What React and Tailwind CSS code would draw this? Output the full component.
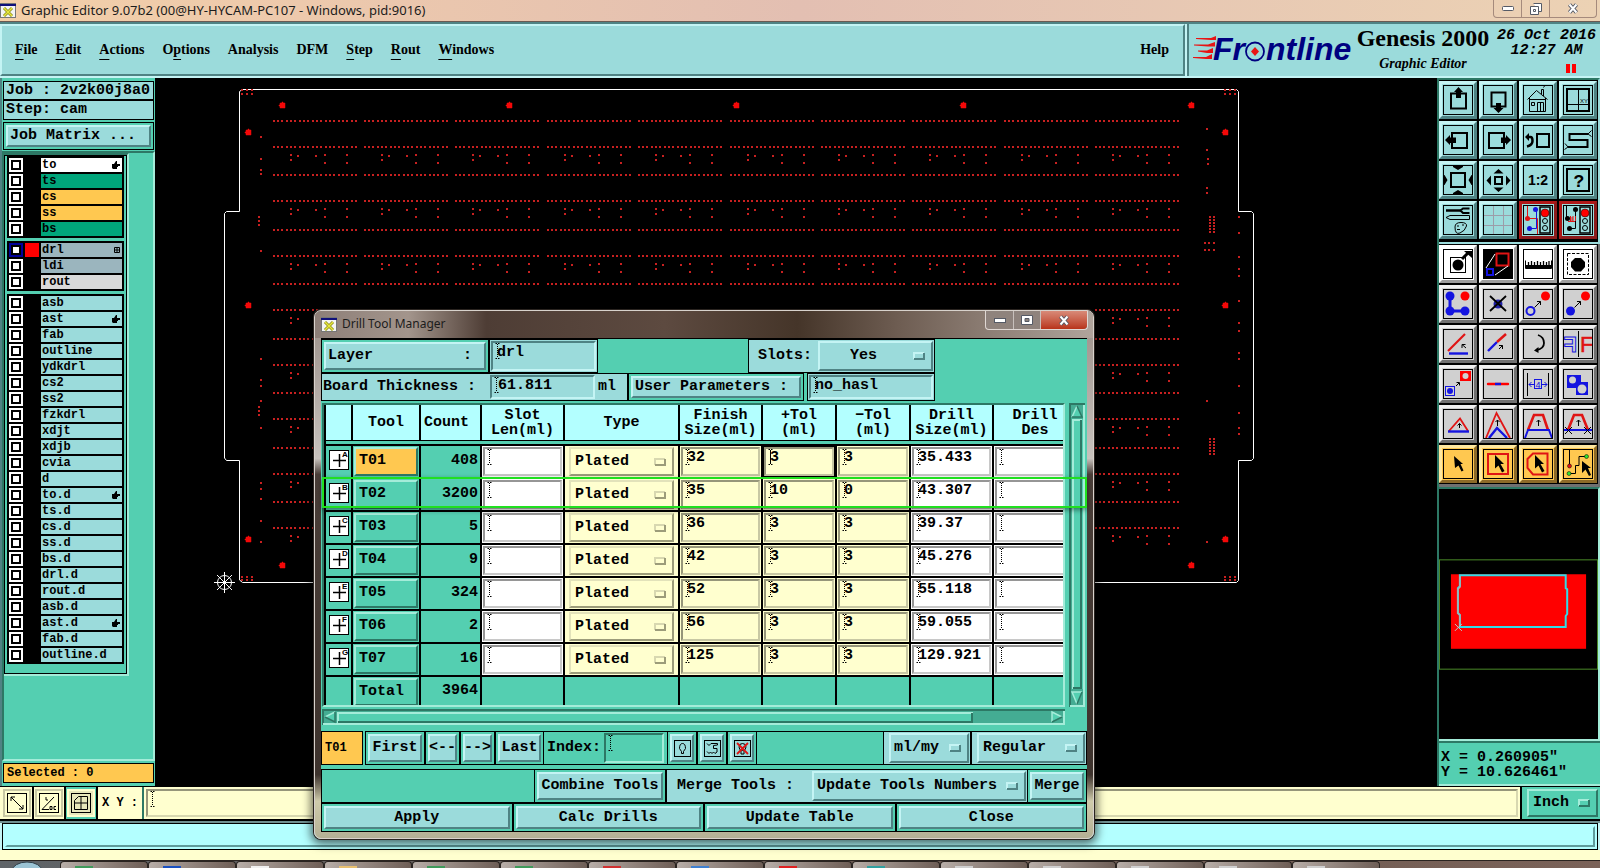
import React from "react";

const MONO = "font-['Liberation_Mono',monospace] font-bold";
const RAISED = "border-2 border-t-[#c4f4f4] border-l-[#c4f4f4] border-b-[#4f8384] border-r-[#4f8384] bg-[#9bdbdb]";
const SUNKEN = "border-2 border-t-[#4f8384] border-l-[#4f8384] border-b-[#c4f4f4] border-r-[#c4f4f4] bg-[#9bdbdb]";
const TEAL_RAISED = "border-2 border-t-[#a4ecd9] border-l-[#a4ecd9] border-b-[#2d7865] border-r-[#2d7865]";
const TEAL_SUNKEN = "border-2 border-t-[#2d7865] border-l-[#2d7865] border-b-[#a4ecd9] border-r-[#a4ecd9]";

function Beam({ solid }) {
  return (
    <svg width="5" height="16" viewBox="0 0 5 16" className="pointer-events-none absolute left-[2px] top-0" aria-hidden="true">
      <path d="M0.5 0.5H2M3 0.5H4.5M0.5 15.5H2M3 15.5H4.5" stroke="#000" fill="none" />
      <path d="M2.5 1V15" stroke="#000" strokeDasharray={solid ? undefined : "1 1"} fill="none" />
    </svg>
  );
}

function Entry({ label, value = "", className, solid, pad = "pb-[8px]" }) {
  return (
    <div className={"relative flex " + className}>
      <Beam solid={solid} />
      <input aria-label={label} defaultValue={value} className={"h-full w-full min-w-0 bg-transparent pl-1 text-[15px] leading-4 outline-none " + pad} />
    </div>
  );
}

function Pip({ tone = "cyan" }) {
  const c = tone === "yellow" ? ["#d8d8b0", "#9c9c7a"] : tone === "teal" ? ["#a4ecd9", "#2d7865"] : ["#c4f4f4", "#4f8384"];
  return (
    <svg width="12" height="8" viewBox="0 0 12 8" className="pointer-events-none absolute right-[6px] top-1/2 -translate-y-1/2" aria-hidden="true">
      <path d="M1 7V1H11" stroke={c[0]} strokeWidth="2" fill="none" />
      <path d="M1 7H11V1" stroke={c[1]} strokeWidth="2" fill="none" />
    </svg>
  );
}

function Pick({ label, value, className, tone, text = "pl-4" }) {
  return (
    <div className={"relative flex " + className}>
      <select aria-label={label} className={"h-full w-full appearance-none bg-transparent text-[15px] leading-5 outline-none " + text}>
        <option>{value}</option>
      </select>
      <Pip tone={tone} />
    </div>
  );
}

function BoxButton({ children, className = "", label, align = "justify-center" }) {
  return (
    <div className={"flex border border-black bg-[#54cfb1] p-[2px] " + className}>
      <button aria-label={label} className={"flex w-full items-center whitespace-pre text-[15px] leading-5 " + align + " " + RAISED}>
        {children}
      </button>
    </div>
  );
}

/* ---------- layer list ---------- */

const LAYER_GROUPS = [
  [
    ["to", "bg-white", "hand"],
    ["ts", "bg-[#00a57b]"],
    ["cs", "bg-[#ffc850]"],
    ["ss", "bg-[#ffc850]"],
    ["bs", "bg-[#00a57b]"],
  ],
  [
    ["drl", "bg-[#9bb5be]", "grid"],
    ["ldi", "bg-[#9bb5be]"],
    ["rout", "bg-[#d9d9d9]"],
  ],
  ["asb", "ast*", "fab", "outline", "ydkdrl", "cs2", "ss2", "fzkdrl", "xdjt", "xdjb", "cvia", "d", "to.d*", "ts.d", "cs.d", "ss.d", "bs.d", "drl.d", "rout.d", "asb.d", "ast.d*", "fab.d", "outline.d"].map(
    (n) => [n.replace("*", ""), "bg-[#9bdbdb]", n.endsWith("*") ? "hand" : undefined]
  ),
];

function LayerMark({ kind }) {
  if (kind === "hand")
    return (
      <svg width="8" height="8" viewBox="0 0 8 8" aria-hidden="true">
        <path d="M0 3H2L4 0H5V3H8V5H6V6H5V8H1L0 7Z" fill="#000" />
      </svg>
    );
  return (
    <svg width="6" height="6" viewBox="0 0 6 6" aria-hidden="true">
      <path d="M0.5 0.5H5.5V5.5H0.5ZM3 0.5V5.5M0.5 3H5.5" stroke="#000" fill="none" />
    </svg>
  );
}

function LayerPanel() {
  return (
    <aside className={"flex w-[155px] shrink-0 flex-col border-l-2 border-[#4f8384] bg-[#54cfb1] " + MONO}>
      <div className="px-px pt-[3px] text-[15px]">
        <div className="h-5 whitespace-pre border border-b-2 border-black bg-[#9bdbdb] pl-[2px] leading-[18px]">Job : 2v2k00j8a0</div>
        <div className="h-[19px] whitespace-pre border border-t-0 border-black bg-[#9bdbdb] pl-[2px] leading-[18px]">Step: cam</div>
        <div className="mt-[2px] h-[28px] border border-black p-[2px]">
          <button className={"h-full w-full pl-[2px] text-left leading-[18px] " + RAISED}>Job Matrix ...</button>
        </div>
      </div>
      <div className="mt-px flex-1 border-2 border-b-[#a4ecd9] border-l-[#2d7865] border-r-[#a4ecd9] border-t-[#2d7865]">
        <div className="w-[125px] border-b-2 border-r-2 border-t-2 border-b-[#a4ecd9] border-r-[#a4ecd9] border-t-[#2d7865]">
          <div className="flex flex-col gap-[3px] border border-black px-[2px] pb-[9px] pt-0">
            {LAYER_GROUPS.map((group, g) => (
              <div key={g} className="bg-black p-px">
                {group.map(([name, bg, mark]) => (
                  <label key={name} className="flex h-4 items-center gap-[2px] px-px">
                    <input
                      type="checkbox"
                      className={
                        "h-[14px] w-[14px] shrink-0 appearance-none border-2 bg-white shadow-[inset_0_0_0_2px_#000] " +
                        (name === "drl" ? "border-[#00009b]" : "border-white")
                      }
                    />
                    <span className={"h-[14px] w-[14px] shrink-0 " + (name === "drl" ? "bg-[#ff0000]" : "bg-black")} />
                    <span className={"flex h-[14px] flex-1 items-center justify-between pl-px pr-[2px] text-[12px] leading-[14px] " + bg}>
                      {name}
                      {mark && <LayerMark kind={mark} />}
                    </span>
                  </label>
                ))}
              </div>
            ))}
          </div>
        </div>
      </div>
      <div className="p-px pb-[3px] pt-[2px]">
        <div className="h-5 border border-black bg-[#ffc850] pl-[3px] text-[12px] leading-[18px]">Selected : 0</div>
      </div>
    </aside>
  );
}

/* ---------- board canvas ---------- */

const ROWS = [121, 147, 175, 201, 230, 256, 284, 310, 339, 365, 393, 419, 448, 474, 502, 528];
const BLOCKS = Array.from({ length: 10 }, (_, i) => Math.floor(273 + i * 91.4));
const PINS = Array.from({ length: 20 }, (_, i) => Math.floor(i / 3) * 13 + (i % 3) * 4);
const PARTS = [[18, 8], [18, 13], [25, 9], [43, 9], [52, 8], [52, 16], [74, 8], [74, 16]];

const sq = (x, y, s = 2) => `M${x} ${y}h${s}v${s}h${-s}z`;

function dotsPath() {
  let d = "";
  ROWS.forEach((y, r) => {
    BLOCKS.forEach((x) => {
      PINS.forEach((p) => (d += sq(x + p, y - 1)));
      if (r % 2 === 1) PARTS.forEach(([px, py]) => (d += sq(x + px - 1, y + py - 1)));
    });
  });
  [136, 158, 169, 173, 250, 358, 379, 385, 400, 427, 482, 488, 498, 520, 541].forEach((y) => (d += sq(260, y)));
  [216, 220, 224, 406, 410, 414].forEach((y) => (d += sq(258, y)));
  [[1206, 128], [1206, 149], [1207, 158], [1207, 163], [1206, 187], [1206, 192], [1206, 541], [1206, 400]].forEach(([x, y]) => (d += sq(x, y)));
  [216, 219, 222, 225, 228, 231, 438, 441, 444, 447, 450, 453].forEach((y) => {
    d += sq(1209, y) + sq(1213, y);
  });
  [242, 249].forEach((y) => [1204, 1208, 1213].forEach((x) => (d += sq(x, y))));
  [216, 232, 256, 268, 275, 300, 322, 330, 352, 358, 385, 412, 427, 433].forEach((y) => (d += sq(1238, y)));
  [[241, 91], [1224, 91]].forEach(([x, y]) => [0, 5, 10].forEach((o) => (d += sq(x + o, y - 2) + sq(x + o, y + 2))));
  [[241, 577], [1224, 577]].forEach(([x, y]) => [0, 5, 10].forEach((o) => (d += sq(x + o, y - 1) + sq(x + o, y + 2))));
  return d;
}

const HOLES = [
  [282, 105], [509, 105], [736, 105], [963, 105], [1191, 105],
  [248, 132], [248, 305], [248, 539],
  [1225, 132], [1225, 305], [1225, 539],
  [282, 565], [1191, 565],
];

function Board() {
  return (
    <div className="min-w-0 flex-1 overflow-hidden bg-black">
      <svg width="1282" height="708" viewBox="155 78 1282 708" role="img" aria-label="Drill layer">
        <path d="M242.5 89.5H1236.5L1238.5 91.5V211.5H1251.5L1253.5 213.5V458.5L1251.5 460.5H1238.5V580.5L1236.5 582.5H242.5L239.5 580V460.5H226.5L224.5 458V213.5L226.5 211.5H239.5V91.5Z" fill="none" stroke="#fff" />
        <path d={dotsPath()} fill="#c82020" shapeRendering="crispEdges" />
        {HOLES.map(([x, y]) => (
          <path key={x + "-" + y} d={`M${x - 2} ${y - 2}h2v-1h1v1h2v5h-5v-2h-1v-1h1z`} fill="#f40808" stroke="#f40808" strokeWidth="0.5" />
        ))}
        <g stroke="#fff" fill="none">
          <circle cx="224.5" cy="582.5" r="7" />
          <path d="M214 582.5H235M224.5 572V593M217 575L232 590M232 575L217 590" />
        </g>
      </svg>
    </div>
  );
}

/* ---------- toolbar icons, each on a 30 by 30 grid ---------- */

const K = { stroke: "#000", fill: "none" };
const RED = "#e01414";
const BLUE = "#1414e0";
const ARROW = "M12 6L21 15H17.5L21.5 22L19 23.5L15.5 16.5L12 19.5Z";

const VIEW_ICONS = [
  ["Pan up", <><rect x="8" y="8.5" width="15" height="15" {...K} strokeWidth="2" /><path d="M15.5 2L20 7H18V13H13V7H11Z" fill="#000" /></>],
  ["Pan down", <><rect x="8.5" y="7.5" width="14" height="14" {...K} strokeWidth="2" /><path d="M15.5 28L20.5 23H18V18H13V23H10.5Z" fill="#000" /></>],
  ["Home", <path {...K} d="M4.5 14.5L13.5 5.5L24.5 14.5M6.5 13V26.5H22.5V13M6.5 14.5H22.5M14.5 26.5V17.5H20.5V26.5M8.5 17.5H11.5V20.5H8.5ZM17.5 17.5V26.5M18.5 9V4.5H20.5V11M20.5 2.5L21.5 1" />],
  ["Zoom to XY", <><rect x="4" y="4" width="22" height="22" {...K} strokeWidth="2" /><path d="M15.5 4V26M4 19.5H26" {...K} /><text x="17" y="18" fontSize="6" fontFamily="Liberation Sans">XY</text></>],
  ["Pan left", <><rect x="9" y="8" width="15" height="15" {...K} strokeWidth="2" /><path d="M2 15L7 10V12.5H13V18H7V20Z" fill="#000" /></>],
  ["Pan right", <><rect x="6" y="8" width="15" height="15" {...K} strokeWidth="2" /><path d="M28 15L23 10V12.5H18V18H23V20Z" fill="#000" /></>],
  ["Previous view", <><rect x="14" y="9" width="12" height="13" {...K} strokeWidth="2" /><path d="M4 12H7.5Q9.5 12 9.5 16T4 21.5" {...K} strokeWidth="2.5" /><path d="M2 12L6 8V16Z" fill="#000" /></>],
  ["Serpentine", <><path d="M25 9H6.5V15H24.5V22H5" {...K} strokeWidth="2" /><path d="M25 9L28.5 5.5M25 9L28.5 11.5M5 22L2 18.5M5 22L1.5 24.5" {...K} /></>],
  ["Fit", <><rect x="8" y="8" width="14" height="14" {...K} strokeWidth="2" /><path d="M15 5L10 2V0H20V2ZM15 25L10 28V30H20V28ZM4.5 15L1.5 20H0V10H1.5ZM25.5 15L28.5 10H30V20H28.5Z" fill="#000" /></>],
  ["Fit selection", <><rect x="12" y="12" width="7" height="7" {...K} strokeWidth="2" /><path d="M15.5 4L20.5 8.5H10.5ZM15.5 27L20.5 22.5H10.5ZM3.5 15.5L8 10.5V20.5ZM27.5 15.5L23 10.5V20.5Z" fill="#000" /></>],
  ["Scale", <text x="15" y="20" textAnchor="middle" fontSize="14" fontWeight="bold" fontFamily="Liberation Sans">1:2</text>],
  ["Query", <><rect x="4" y="4" width="22" height="22" {...K} strokeWidth="2" /><text x="16" y="22" textAnchor="middle" fontSize="18" fontWeight="bold" fontFamily="Liberation Mono">?</text></>],
  ["Settings", <><path d="M3 5.5H18" {...K} strokeWidth="2.5" /><path d="M26.5 3.5H20L17.5 5.5L20 8H26.5" {...K} strokeWidth="2" /><path d="M3 12.5L7 10.5H26.5V14.5H7Z" {...K} /><path d="M12 22Q12 17.5 18 17.5T23.5 21Q22 26 17 28T12 22ZM14 21H16M19 20H21M14 24.5H17" {...K} /></>],
  ["Grid", <path d="M10.5 0V30M20.5 0V30M0 10.5H30M0 20.5H30" stroke="#9c9ca8" fill="none" />],
  ["Net blue", <><path d="M4.5 0V13.5H14.5V30" stroke={RED} fill="none" /><path d="M13.5 4V23.5H7" stroke={BLUE} fill="none" /><circle cx="12.5" cy="4.5" r="2.5" fill={BLUE} /><circle cx="4.5" cy="13.5" r="2.5" fill={RED} /><circle cx="6.5" cy="23.5" r="2.5" fill={BLUE} /><rect x="17" y="2" width="10" height="26" {...K} strokeWidth="1.5" /><circle cx="22" cy="8" r="4" fill="#f00" stroke="#000" strokeWidth="0.5" /><circle cx="22" cy="16" r="2.5" {...K} /><circle cx="22" cy="23" r="2.5" {...K} /></>, true],
  ["Net black", <><path d="M3.5 0V13.5M12.5 4V23.5H7" {...K} /><path d="M5 16.5H12M7.5 16V11M10 16V11M12.5 16V11M9 12V16" stroke={RED} fill="none" /><circle cx="12.5" cy="4.5" r="2.5" /><circle cx="4.5" cy="13.5" r="2.5" /><circle cx="6.5" cy="23.5" r="2.5" /><rect x="17" y="2" width="10" height="26" {...K} strokeWidth="1.5" /><circle cx="22" cy="8" r="4" fill="#f00" stroke="#000" strokeWidth="0.5" /><circle cx="22" cy="16" r="2.5" {...K} /><circle cx="22" cy="23" r="2.5" {...K} /></>, true],
];

const EDIT_ICONS = [
  ["Add feature", "w", <><rect x="7.5" y="8.5" width="15" height="15" {...K} /><circle cx="15" cy="16" r="5.5" /><path d="M19 10L25 4" stroke="#000" strokeWidth="3" /><path d="M21 2H29V9Z" /></>],
  ["Area zoom", "w", <><rect x="1" y="1" width="28" height="28" /><rect x="13.5" y="4.5" width="12" height="12" fill="none" stroke={RED} strokeWidth="2" /><path d="M12 5L3 19M25 17L12 26" stroke="#fff" fill="none" /><rect x="4" y="20" width="6" height="6" fill="none" stroke={BLUE} strokeWidth="2" /></>],
  ["Measure", "w", <><path d="M2.5 11.5V19.5H28.5V11.5" fill="none" stroke="#000" /><path d="M3 16H28V20H3Z" /><path d="M5.5 13V17M8.5 12V17M11.5 13V17M14.5 12V17M17.5 13V17M20.5 12V17M23.5 13V17M26 12V17" {...K} strokeWidth="1.3" /></>],
  ["Select area", "w", <><rect x="4.5" y="4.5" width="21" height="21" {...K} strokeDasharray="3 1.5" /><path d="M12 9H18L22 13V18L18 22.5H12L8 18V13Z" /></>],
  ["Chain", "g", <><path d="M7 7V22H22" stroke={BLUE} strokeWidth="3" fill="none" /><circle cx="7" cy="7" r="4.5" fill={BLUE} /><circle cx="7" cy="22" r="4.5" fill={BLUE} /><circle cx="22" cy="22" r="4.5" fill={BLUE} /><circle cx="22" cy="7" r="4.5" fill="#f00" /></>],
  ["Delete", "g", <><circle cx="15" cy="15" r="4.5" fill="#2020a8" /><path d="M7 7L23 22M23 7L7 22" {...K} strokeWidth="1.8" /></>],
  ["Move outline", "g", <><circle cx="7.5" cy="22" r="4" fill="none" stroke={BLUE} strokeWidth="2" /><circle cx="22.5" cy="7" r="4.5" fill="#f00" /><path d="M11.5 18.5L17.5 12.5M14 12.5H17.5V16" {...K} /></>],
  ["Copy", "g", <><circle cx="7.5" cy="22" r="4.5" fill={BLUE} /><circle cx="22.5" cy="7" r="4.5" fill="#f00" /><path d="M11.5 18.5L17.5 12.5M14 12.5H17.5V16" {...K} /></>],
  ["Rotate line", "g", <><path d="M5 22L22 5" stroke={RED} strokeWidth="2.2" /><path d="M6 24.5H25" stroke={BLUE} strokeWidth="2.4" /><path d="M23 19L19 15.5M19 19V15.5H22.5" {...K} /></>],
  ["Stretch line", "g", <><path d="M5 22L14 13" stroke={BLUE} strokeWidth="2.4" /><path d="M14 13L23 5" stroke={RED} strokeWidth="2.4" /><path d="M16 20L19.5 16.5M16 16.5H19.5V20" {...K} /></>],
  ["Rotate", "g", <><path d="M15 6Q21 8 21 14T13 21" {...K} strokeWidth="1.8" /><path d="M11 21.5L15.5 18V24Z" /></>],
  ["Mirror", "g", <><path d="M15.5 2V28" {...K} /><g transform="matrix(-1 0 0 1 14 0)"><text x="0" y="23" fontSize="22" fontWeight="bold" fontFamily="Liberation Sans" fill="none" stroke={BLUE}>F</text></g><text x="17" y="23" fontSize="22" fontFamily="Liberation Sans" fill={RED} stroke={RED} strokeWidth="0.5">F</text></>],
  ["Transform", "g", <><rect x="2.5" y="17.5" width="9" height="9" fill="none" stroke={BLUE} /><circle cx="7" cy="22" r="3" fill={BLUE} /><rect x="17" y="2" width="11" height="10" fill="#f00" /><circle cx="22.5" cy="7" r="3" fill="#d0d0d0" /><path d="M13 17L16 14M13.5 13.5H16.5V16.5" {...K} /></>],
  ["Resize line", "g", <><path d="M5 15H25" stroke="#f00" strokeWidth="2.4" strokeLinecap="round" /><path d="M12 15H18" stroke={BLUE} strokeWidth="2.4" /></>],
  ["Spacing", "g", <><path d="M4.5 4V27M25.5 4V27" {...K} /><path d="M6 15.5H11M6 15.5L8.5 13M6 15.5L8.5 18M24 15.5H19M24 15.5L21.5 13M24 15.5L21.5 18" stroke={BLUE} fill="none" /><rect x="11.5" y="10.5" width="7" height="9" fill="none" stroke={BLUE} /><text x="15" y="18.5" textAnchor="middle" fontSize="9" fontFamily="Liberation Sans" fill={BLUE}>4</text></>],
  ["Merge pads", "g", <><path d="M4 6H18V13H25V26H13V19H4Z" fill={BLUE} /><circle cx="9.5" cy="11" r="3.5" fill="#d0d0d0" /><circle cx="19" cy="20" r="4.5" fill="#d0d0d0" /></>],
  ["Triangle", "g", <><path d="M6 22L17 9.5L25 22" fill="none" stroke={RED} strokeWidth="1.8" /><path d="M5 22.5H26" stroke={BLUE} strokeWidth="2.4" /><path d="M16.5 19V14.5M14.5 16.5L16.5 14.5L18.5 16.5" {...K} /></>],
  ["Peak", "g", <><path d="M3 29L13.5 4L27 29" fill="none" stroke={RED} strokeWidth="1.8" /><path d="M6 29L14 19L24 29" fill="none" stroke={BLUE} strokeWidth="2.4" /><path d="M14.5 17V11M12.5 13L14.5 11L16.5 13" {...K} /></>],
  ["Trapezoid", "g", <><path d="M5 21L11 6H20L25 21" fill="none" stroke={RED} strokeWidth="2.6" /><path d="M2 29L5 21H26L29 29" fill="none" stroke={BLUE} strokeWidth="2" /><path d="M15.5 17V11M13.5 13L15.5 11L17.5 13" {...K} /></>],
  ["Trim", "g", <><path d="M5 21L11 6H19L25 21" fill="none" stroke={RED} strokeWidth="2.6" /><path d="M1 21H29" stroke={BLUE} strokeWidth="2" /><path d="M15.5 17V11M13.5 13L15.5 11L17.5 13M2 18L9 25M9 18L2 25M21 18L28 25M28 18L21 25" {...K} /></>],
  ["Pointer", "o", <path d="M11 7L20 15H17.5L20.5 21.5L18.5 22.5L15.5 16.5L12 19Z" />],
  ["Frame select", "o", <><rect x="5" y="5" width="20" height="20" fill="none" stroke={RED} strokeWidth="2" /><path d={ARROW} /></>],
  ["Polygon select", "o", <><path d="M10 4.5H24.5V25.5H10L4.5 19V10Z" fill="none" stroke={RED} strokeWidth="2" /><path d={ARROW} /></>],
  ["Net select", "o", <><path d="M6.5 1V17M6 24.5H12.5V16.5H16V7.5H22" {...K} /><circle cx="6.5" cy="17" r="2" fill={RED} stroke="#000" strokeWidth="0.5" /><circle cx="6" cy="24.5" r="2" fill="#30e030" stroke="#000" strokeWidth="0.5" /><circle cx="23.5" cy="7.5" r="2" fill="#30e030" stroke="#000" strokeWidth="0.5" /><path d="M19 12L28 19H25L28 26L26 27L22.5 20.5L19 24Z" /></>],
];

const TONES = {
  c: "bg-[#9bdbdb] border-t-[#c4f4f4] border-l-[#c4f4f4] border-b-[#4f8384] border-r-[#4f8384]",
  r: "bg-[#9bdbdb] border-t-[#b01818] border-l-[#b01818] border-b-[#8c1c1c] border-r-[#8c1c1c]",
  w: "bg-white border-t-white border-l-white border-b-[#9c9c9c] border-r-[#9c9c9c]",
  g: "bg-[#d0d0d0] border-t-[#f0f0f0] border-l-[#f0f0f0] border-b-[#707070] border-r-[#707070]",
  o: "bg-[#ffc850] border-t-[#ffe8a0] border-l-[#ffe8a0] border-b-[#8c6a28] border-r-[#8c6a28]",
};

function ToolButton({ label, tone, children }) {
  return (
    <button aria-label={label} className={"flex h-[38px] items-center justify-center border-[3px] " + TONES[tone]}>
      <svg width="30" height="30" viewBox="0 0 30 30" className="shrink-0" aria-hidden="true">
        {children}
        <rect x="0.5" y="0.5" width="29" height="29" {...K} />
      </svg>
    </button>
  );
}

function ToolPanel() {
  return (
    <aside className="flex w-[163px] shrink-0 flex-col border-l-2 border-[#2d7865] bg-black">
      <div className="grid grid-cols-4 gap-[2px] border-b-2 border-r-2 border-t-2 border-[#9bdbdb] border-t-[#2d7865] bg-black pb-[3px] pr-px pt-px">
        {VIEW_ICONS.map(([label, art, red]) => (
          <ToolButton key={label} label={label} tone={red ? "r" : "c"}>{art}</ToolButton>
        ))}
      </div>
      <div className="grid grid-cols-4 gap-[2px] border-b-[3px] border-r-2 border-[#707070] bg-black pb-px pr-px pt-px">
        {EDIT_ICONS.map(([label, tone, art]) => (
          <ToolButton key={label} label={label} tone={tone}>{art}</ToolButton>
        ))}
      </div>
      <div className="flex flex-1 flex-col justify-center border-r-2 border-t-2 border-[#a4ecd9] border-t-[#2d7865] bg-black pt-[2px]">
        <svg className="w-full" height="112" viewBox="0 0 160 112" role="img" aria-label="Overview">
          <rect x="0.5" y="0.5" width="159" height="110" fill="none" stroke="#4a8a28" />
          <rect x="12" y="15" width="136" height="75" fill="#ff0000" />
          <path d="M21 16H127.5V29L129 30V55L127.5 57V68H21V56L19 54V29L21 27Z" fill="none" stroke="#30dce8" strokeWidth="2" />
          <path d="M21 17V28L19 30V54L21 56V67" fill="none" stroke="#a8b4b4" strokeWidth="1.5" />
          <path d="M16 65L23 72M23 65L16 72" stroke="#b8c8c8" fill="none" />
        </svg>
      </div>
      <div className={"whitespace-pre border-b-2 border-t-2 border-[#a4ecd9] bg-[#54cfb1] text-[15px] leading-[15px] " + MONO}>
        <div className="border-t-2 border-[#2d7865] pb-[4px] pl-[2px] pt-[7px]">
          <div>X = 0.260905"</div>
          <div>Y = 10.626461"</div>
        </div>
      </div>
    </aside>
  );
}

/* ---------- header ---------- */

const MENUS = [["File", 0], ["Edit", 0], ["Actions", 0], ["Options", 1], ["Analysis", -1], ["DFM", -1], ["Step", 0], ["Rout", 0], ["Windows", 0]];

function XIcon() {
  return (
    <svg width="16" height="15" viewBox="0 0 16 15" aria-hidden="true">
      <rect x="0.5" y="0.5" width="15" height="14" fill="#f4f4f4" stroke="#777" />
      <path d="M0 1H16V3H0Z" fill="#10107a" />
      <path d="M4 5L12 13M12 5L4 13" stroke="#8a8a10" strokeWidth="3" />
      <path d="M4 5L12 13M12 5L4 13" stroke="#e6e640" strokeWidth="1.5" />
    </svg>
  );
}

function Menu({ name, hot }) {
  return (
    <button>
      {hot < 0 ? name : (
        <>
          {name.slice(0, hot)}
          <span className="underline underline-offset-[5px]">{name[hot]}</span>
          {name.slice(hot + 1)}
        </>
      )}
    </button>
  );
}

function Frontline() {
  return (
    <svg width="162" height="44" viewBox="0 -4 162 44" role="img" aria-label="Frontline">
      <path d="M3 6H18L23 4V8H18L3 7ZM1 12.5H15L22 10V14.5H15L1 13.5ZM5 18.5H14L20 16V21H14L5 19.5ZM0 25H13L19 22V27H13L0 26Z" fill="#e81414" />
      <g fontFamily="Liberation Sans" fontWeight="bold" fontStyle="italic" fontSize="32" fill="#000080">
        <text x="20" y="28">Fr</text>
        <text x="73" y="28">ntline</text>
      </g>
      <circle cx="62" cy="19.5" r="9" fill="none" stroke="#000080" strokeWidth="1.8" />
      <path d="M62 15L66 19.5L62 24L58 19.5Z" fill="#e81414" />
    </svg>
  );
}

function Header() {
  return (
    <>
      <div className="flex h-[22px] items-start justify-between border-b border-[#6b5a52] bg-linear-to-r from-[#f3cfa8] via-[#e3bfb2] to-[#ecd2b4]">
        <div className="flex items-center gap-[5px] pt-px font-['Noto_Sans',sans-serif] text-[13px] leading-[18px] text-[#1c1c1c]">
          <XIcon />
          Graphic Editor 9.07b2 (00@HY-HYCAM-PC107 - Windows, pid:9016)
        </div>
        <div className="mr-[3px] flex h-[18px] rounded-b border border-t-0 border-[#a58a7c]">
          <button aria-label="Minimize" className="flex w-7 items-center justify-center border-r border-[#a58a7c]">
            <svg width="12" height="6" viewBox="0 0 12 6"><rect x="0.5" y="0.5" width="11" height="4" rx="1" fill="#fff" stroke="#555a66" /></svg>
          </button>
          <button aria-label="Restore" className="flex w-7 items-center justify-center border-r border-[#a58a7c]">
            <svg width="12" height="12" viewBox="0 0 12 12"><path d="M3.5 .5H11.5V8.5H9M.5 3.5H8.5V11.5H.5ZM3.5 6.5H5.5V8.5H3.5Z" fill="#fff" stroke="#555a66" /></svg>
          </button>
          <button aria-label="Close window" className="flex w-[46px] items-center justify-center">
            <svg width="12" height="11" viewBox="0 0 12 11"><path d="M2.5 1.5L9.5 9.5M9.5 1.5L2.5 9.5" stroke="#555a66" strokeWidth="4" /><path d="M2.5 1.5L9.5 9.5M9.5 1.5L2.5 9.5" stroke="#fff" strokeWidth="2" /></svg>
          </button>
        </div>
      </div>
      <header className="flex h-[56px] border-b-2 border-t-2 border-b-[#c4f4f4] border-t-[#4f8384] bg-[#9bdbdb]">
        <nav className="flex flex-1 items-center gap-[18px] border-2 border-b-[#4f8384] border-l-[#c4f4f4] border-r-[#4f8384] border-t-[#c4f4f4] pb-[2px] pl-[13px] pr-[14px] font-['Liberation_Serif',serif] text-[14px] font-bold">
          {MENUS.map(([name, hot]) => <Menu key={name} name={name} hot={hot} />)}
          <button className="ml-auto">Help</button>
        </nav>
        <div className="flex w-[415px] items-center border-l-2 border-[#c4f4f4]">
          <div className="flex h-full w-full items-center justify-between border-l-2 border-[#4f8384] px-1">
            <Frontline />
            <div className="mr-[6px] text-center font-['Liberation_Serif',serif] font-bold">
              <div className="text-[24px] leading-7">Genesis 2000</div>
              <div className="text-[14px] italic leading-6">Graphic Editor</div>
            </div>
            <div className={"text-center text-[15px] italic leading-[15px] " + MONO}>
              <div>26 Oct 2016</div>
              <div>12:27 AM</div>
              <svg width="12" height="9" viewBox="0 0 12 9" className="ml-auto mr-[18px] mt-[6px]" aria-hidden="true">
                <path d="M0 0H4V9H0ZM6 0H10V9H6Z" fill="#ff0000" />
              </svg>
            </div>
          </div>
        </div>
      </header>
    </>
  );
}

/* ---------- drill tool manager ---------- */

const COLUMNS = [
  ["", "w-[27px]"], ["Tool", "w-[68px]"], ["Count", "w-[61px]"], ["Slot\nLen(ml)", "w-[83px]"], ["Type", "w-[115px]"],
  ["Finish\nSize(ml)", "w-[83px]"], ["+Tol\n(ml)", "w-[74px]"], ["−Tol\n(ml)", "w-[74px]"], ["Drill\nSize(ml)", "w-[83px]"], ["Drill\nDes", "w-[84px]"],
];

const TOOLS = [
  ["T01", 408, "32", "3", "3", "35.433"],
  ["T02", 3200, "35", "10", "0", "43.307"],
  ["T03", 5, "36", "3", "3", "39.37"],
  ["T04", 9, "42", "3", "3", "45.276"],
  ["T05", 324, "52", "3", "3", "55.118"],
  ["T06", 2, "56", "3", "3", "59.055"],
  ["T07", 16, "125", "3", "3", "129.921"],
];

const TD = "h-[33px] border-b-2 border-r-2 border-black p-0";
const WHITE_IN = "m-px h-[29px] border-2 border-b-[#c8c8c8] border-l-[#969696] border-r-[#c8c8c8] border-t-[#969696] bg-white";
const YELLOW_IN = "m-px h-[29px] border-2 border-b-[#c8c8a4] border-l-[#96967a] border-r-[#c8c8a4] border-t-[#96967a] bg-[#ffffcf]";

function DrillMark({ letter }) {
  return (
    <svg width="20" height="20" viewBox="0 0 20 20" className="mb-[3px] ml-[3px]" aria-hidden="true">
      <rect x="0.5" y="0.5" width="19" height="19" fill="#fff" stroke="#000" />
      <path d="M10.5 4V17M4 10.5H17" stroke="#000" strokeWidth="1.5" />
      <text x="13" y="7" fontSize="8" fontFamily="Liberation Sans">{letter}</text>
    </svg>
  );
}

function ToolTable() {
  return (
    <div className="relative z-10">
      <div className={"h-[304px] w-[743px] overflow-hidden " + TEAL_SUNKEN}>
        <table className="w-[754px] table-fixed border-separate border-spacing-0 border-l-2 border-black text-[15px]">
          <thead>
            <tr>
              {COLUMNS.map(([name, w], i) => (
                <th key={i} className={"border-b-2 border-black p-0 pb-[3px] " + w}>
                  <div className={"flex h-[36px] items-center whitespace-pre border-b border-r-2 border-black bg-[#b3ffff] text-center leading-[15px] " + (i === 2 ? "justify-start pl-[3px]" : "justify-center")}>{name}</div>
                </th>
              ))}
            </tr>
          </thead>
          <tbody>
            {TOOLS.map(([id, count, finish, plus, minus, drill], r) => (
              <tr key={id}>
                <td className={TD}><DrillMark letter={"ABCDEFG"[r]} /></td>
                <td className={TD}>
                  <button className={"mx-px block h-[29px] w-[64px] pl-[3px] text-left " + TEAL_RAISED + (r === 0 ? " bg-[#ffc850]" : "")}>{id}</button>
                </td>
                <td className={TD + " pr-[2px] text-right"}>{count}</td>
                <td className={TD + " bg-white"}><Entry label={id + " slot length"} className={WHITE_IN} /></td>
                <td className={TD + " bg-[#ffffcf]"}>
                  <Pick label={id + " type"} value="Plated" tone="yellow" text="pl-[4px]" className="mx-1 h-[29px] border-2 border-b-[#9c9c7a] border-l-[#e2e2ba] border-r-[#9c9c7a] border-t-[#e2e2ba]" />
                </td>
                <td className={TD + " bg-[#ffffcf]"}><Entry label={id + " finish size"} value={finish} className={YELLOW_IN} /></td>
                <td className={TD + (r === 0 ? " bg-black" : " bg-[#ffffcf]")}><Entry label={id + " plus tolerance"} value={plus} solid={r === 0} className={YELLOW_IN} /></td>
                <td className={TD + " bg-[#ffffcf]"}><Entry label={id + " minus tolerance"} value={minus} className={YELLOW_IN} /></td>
                <td className={TD + " bg-white"}><Entry label={id + " drill size"} value={drill} className={WHITE_IN} /></td>
                <td className={TD + " bg-white"}><Entry label={id + " designator"} className={WHITE_IN} /></td>
              </tr>
            ))}
            <tr>
              <td className="h-[29px] border-r-2 border-black" />
              <td className="border-r-2 border-black p-0"><div className={"mx-px h-[28px] pl-[3px] leading-6 " + TEAL_RAISED}>Total</div></td>
              <td className="border-r-2 border-black p-0 pr-[2px] text-right">3964</td>
              {[3, 4, 5, 6, 7, 8, 9].map((i) => <td key={i} className="border-r-2 border-black" />)}
            </tr>
          </tbody>
        </table>
      </div>
      <div className="pointer-events-none absolute left-0 right-[-22px] top-[74px] h-[31px] border-2 border-[#20e020] shadow-[0_2px_5px_rgba(0,0,0,0.45)]" />
    </div>
  );
}

function VScroll() {
  return (
    <svg width="16" height="304" viewBox="0 0 16 304" aria-hidden="true">
      <rect width="16" height="304" fill="#44ac93" />
      <path d="M1 304V1H16" stroke="#2d7865" strokeWidth="2" fill="none" />
      <path d="M15 2V303H1" stroke="#a4ecd9" strokeWidth="2" fill="none" />
      <path d="M8 3L3 14H13Z" fill="#54cfb1" /><path d="M8 3L3 14" stroke="#a4ecd9" strokeWidth="1.5" /><path d="M3 14H13L8 3" stroke="#2d7865" strokeWidth="1.5" fill="none" />
      <rect x="3" y="16" width="11" height="270" fill="#54cfb1" />
      <path d="M4 286V17H13" stroke="#a4ecd9" strokeWidth="2" fill="none" /><path d="M4 285H12V17" stroke="#2d7865" strokeWidth="2" fill="none" />
      <path d="M8 301L3 289H13Z" fill="#54cfb1" /><path d="M13 289H3L8 301" stroke="#a4ecd9" strokeWidth="1.5" fill="none" /><path d="M13 289L8 301" stroke="#2d7865" strokeWidth="1.5" />
    </svg>
  );
}

function HScroll() {
  return (
    <svg width="743" height="16" viewBox="0 0 743 16" aria-hidden="true">
      <rect width="743" height="16" fill="#44ac93" />
      <path d="M1 16V1H743" stroke="#2d7865" strokeWidth="2" fill="none" />
      <path d="M742 2V15H1" stroke="#a4ecd9" strokeWidth="2" fill="none" />
      <path d="M3 8L13 3V13Z" fill="#54cfb1" /><path d="M13 3L3 8" stroke="#a4ecd9" strokeWidth="1.5" /><path d="M3 8L13 13V3" stroke="#2d7865" strokeWidth="1.5" fill="none" />
      <rect x="15" y="3" width="636" height="11" fill="#54cfb1" />
      <path d="M16 14V4H651" stroke="#a4ecd9" strokeWidth="2" fill="none" /><path d="M16 13H650V4" stroke="#2d7865" strokeWidth="2" fill="none" />
      <path d="M740 8L730 3V13Z" fill="#54cfb1" /><path d="M730 13V3L740 8" stroke="#a4ecd9" strokeWidth="1.5" fill="none" /><path d="M740 8L730 13" stroke="#2d7865" strokeWidth="1.5" />
    </svg>
  );
}

const SMALL = [
  ["Show tool", <path key="a" d="M5.5 8.5Q5.5 3.5 8.5 3.5T11.5 8.5L9.5 11.5V13.5H7.5V11.5Z" {...K} />],
  ["Board view", <path key="b" d="M3 3.5L5 5.5L7 3.5H13.5V5L9.5 5.5V8.5H13V12L11 13.5L9.5 12L8 13.5L6.5 12L5 13.5L3 11.5" {...K} />],
  ["Clear marks", <><circle cx="8.5" cy="7" r="3.5" {...K} /><path d="M7 10V14H10V10" {...K} /><path d="M3 3L14 14M14 3L3 14" stroke="#e01414" strokeWidth="1.8" /></>],
];

function DrillDialog() {
  return (
    <section
      aria-label="Drill Tool Manager"
      className="absolute left-[314px] top-[310px] w-[780px] rounded-[7px] border border-[#d8d2cc] bg-[linear-gradient(180deg,#9a8f88_0%,#c8c2bd_28%,#4a3e38_31%,#3e332d_88%,#cfcbab_93%,#b4b095_100%)] px-[6px] pb-[6px] shadow-[0_0_0_1px_#2a2420,0_2px_10px_3px_rgba(0,0,0,0.6)]"
    >
      <div className="-mx-[6px] flex h-[27px] items-start justify-between rounded-t-[6px] bg-[linear-gradient(90deg,#8d7f78_0%,#a3958c_12%,#4e3d35_22%,#5d4a40_45%,#453529_62%,#6e5d52_75%,#b0a49c_100%)] pl-[6px] pr-[5px]">
        <div className="flex items-center gap-[5px] pt-[3px] font-['Noto_Sans',sans-serif] text-[12px] leading-5 text-[#1c1c1c]">
          <XIcon />
          <span>Drill Tool Manager</span>
        </div>
        <div className="flex h-[19px] rounded-b border border-t-0 border-[#e0d8d4] bg-[#8f837d]">
          <button aria-label="Minimize dialog" className="flex w-7 items-center justify-center border-r border-[#c8c0bc]">
            <svg width="12" height="5" viewBox="0 0 12 5"><rect x="0.5" y="0.5" width="11" height="4" fill="#fff" stroke="#555a66" /></svg>
          </button>
          <button aria-label="Maximize dialog" className="flex w-[27px] items-center justify-center border-r border-[#c8c0bc]">
            <svg width="12" height="10" viewBox="0 0 12 10"><path d="M.5 .5H11.5V9.5H.5ZM4 3.5H8V6.5H4Z" fill="#fff" stroke="#555a66" fillRule="evenodd" /></svg>
          </button>
          <button aria-label="Close dialog" className="flex w-[46px] items-center justify-center rounded-br bg-linear-to-b from-[#d88a78] to-[#b83218]">
            <svg width="12" height="11" viewBox="0 0 12 11"><path d="M2.5 1.5L9.5 9.5M9.5 1.5L2.5 9.5" stroke="#555a66" strokeWidth="4" /><path d="M2.5 1.5L9.5 9.5M9.5 1.5L2.5 9.5" stroke="#fff" strokeWidth="2" /></svg>
          </button>
        </div>
      </div>

      <div className={"border-t border-black bg-[#54cfb1] text-[15px] " + MONO}>
        <div className="flex h-[34px]">
          <BoxButton className="w-[168px]" align="pl-[2px]">{"Layer          :"}</BoxButton>
          <div className="w-[109px] border border-black bg-[#9bdbdb] p-px"><Entry label="Layer" value="drl" className={"h-full " + SUNKEN} /></div>
          <div className="ml-[150px] flex w-[187px] items-center border border-black bg-[#9bdbdb] p-px pl-[9px]">
            <span className="w-[60px]">Slots:</span>
            <Pick label="Slots" value="Yes" className={"h-full flex-1 " + RAISED} text="pl-[30px]" />
          </div>
        </div>
        <div className="flex h-[28px]">
          <div className="flex w-[307px] items-center border border-black bg-[#9bdbdb] pl-px">
            <label htmlFor="thick" className="w-[167px]">Board Thickness :</label>
            <div className={"relative h-[24px] w-[105px] " + SUNKEN}>
              <Beam />
              <input id="thick" defaultValue="61.811" className="block h-full w-full bg-transparent pb-[4px] pl-[6px] leading-4 outline-none" />
            </div>
            <span className="pl-[3px]">ml</span>
          </div>
          <BoxButton className="w-[176px]" align="pl-[2px]">User Parameters :</BoxButton>
          <div className="ml-[3px] w-[128px] border border-black bg-[#9bdbdb] p-px"><Entry label="User parameters" value="no_hasl" pad="pb-[4px]" className={"h-full " + SUNKEN} /></div>
        </div>

        <div className="grid grid-cols-[auto_1fr] gap-x-1 gap-y-[2px] py-[2px] pl-px">
          <ToolTable />
          <VScroll />
          <HScroll />
        </div>

        <div className="mt-1 flex h-[34px]">
          <div className="mr-[2px] w-[42px] border border-black bg-[#ffc850] pl-[3px] text-[12px] leading-[32px]">T01</div>
          <BoxButton className="w-[60px]">First</BoxButton>
          <BoxButton className="w-[35px]">{"<--"}</BoxButton>
          <BoxButton className="w-[35px]">{"-->"}</BoxButton>
          <BoxButton className="w-[49px]">Last</BoxButton>
          <div className="flex flex-1 items-center border border-x-0 border-black p-px pl-[3px]">
            <label className="w-[57px]" htmlFor="idx">Index:</label>
            <div className={"relative h-full w-[60px] " + TEAL_SUNKEN}>
              <Beam />
              <input id="idx" className="h-full w-full bg-transparent pl-[8px] outline-none" />
            </div>
          </div>
          {SMALL.map(([label, art]) => (
            <BoxButton key={label} label={label} className="w-[30px]">
              <svg width="17" height="17" viewBox="0 0 17 17">{art}<rect x="0.5" y="0.5" width="16" height="16" {...K} /></svg>
            </BoxButton>
          ))}
          <div className="w-[126px] border-b border-t border-black" />
          <div className="w-[88px] border border-black bg-[#9bdbdb] p-px pl-[5px]"><Pick label="Units" value="ml/my" className={"h-full " + RAISED} text="pl-[3px]" /></div>
          <div className="w-[116px] border border-black bg-[#9bdbdb] p-px pl-[5px]"><Pick label="Mode" value="Regular" className={"h-full " + RAISED} text="pl-[4px]" /></div>
        </div>

        <div className="mt-1 flex h-[34px]">
          <div className="flex-1 border border-r-0 border-black" />
          <BoxButton className="w-[132px]">Combine Tools</BoxButton>
          <div className="flex w-[361px] items-center border border-r-0 border-black bg-[#9bdbdb] p-px pl-[10px]">
            <span className="w-[135px]">Merge Tools :</span>
            <Pick label="Merge tools" value="Update Tools Numbers" className={"h-full flex-1 " + RAISED} text="pl-[3px]" />
          </div>
          <BoxButton className="w-[60px]">Merge</BoxButton>
        </div>
        <div className="flex h-[29px]">
          {["Apply", "Calc Drills", "Update Table", "Close"].map((t) => <BoxButton key={t} className="flex-1">{t}</BoxButton>)}
        </div>
      </div>
    </section>
  );
}

/* ---------- bottom bars ---------- */

const COORD_ICONS = [
  ["Absolute", "bg-[#ffffcf] border-[#c8c8a4]", <path key="a" d="M4 4L16 16M4 8V4H8M16 12V16H12" {...K} />],
  ["Angle", "bg-[#ffffcf] border-[#c8c8a4]", <path key="b" d="M3 16.5L15 4M3 16.5H10M7 4V7H9M11 13.5H13V16.5H11ZM17 13.5H15V16.5H17" {...K} />],
  ["Snap", "bg-[#e8e8bc] border-[#ffffcf]", <path key="c" d="M3.5 16.5V7.5L7.5 3.5H16.5V16.5ZM10 3.5V16.5M3.5 10H16.5" {...K} />],
];

function Footer() {
  return (
    <footer>
      <div className={"flex h-[35px] border-b-2 border-t border-black bg-[#ffffcf] pl-[2px] text-[12px] " + MONO}>
        {COORD_ICONS.map(([label, cls, art], i) => (
          <div key={label} className={"flex w-8 items-center justify-center border-r-2 border-black " + (i === 2 ? "border-r-0 bg-[#54cfb1]" : "")}>
            <button aria-label={label} className={"flex h-7 w-7 items-center justify-center border-2 " + cls}>
              <svg width="20" height="20" viewBox="0 0 20 20">{art}<rect x="0.5" y="0.5" width="19" height="19" {...K} /></svg>
            </button>
          </div>
        ))}
        <label htmlFor="xy" className="w-[44px] text-center leading-8">X Y :</label>
        <div className="flex-1 border-l-2 border-[#2d7865] p-[2px]">
          <div className="relative h-full border-2 border-b-[#d8d8b0] border-l-[#96967a] border-r-[#d8d8b0] border-t-[#96967a]">
            <Beam />
            <input id="xy" className="h-full w-full bg-transparent pl-3 outline-none" />
          </div>
        </div>
        <div className="w-[80px] border-l-2 border-black bg-[#54cfb1] p-[2px] pl-[5px]">
          <Pick label="Unit" value="Inch" tone="teal" text="pl-[4px]" className={"h-full " + TEAL_RAISED} />
        </div>
      </div>
      <div className="h-[29px] border-t-2 border-[#6f8f90] bg-[#c4f4f4] px-[2px]">
        <div className="h-[27px] border border-black bg-[#b3ffff] p-[2px]">
          <output aria-label="Status" className="block h-full border-2 border-b-[#5f9c9c] border-l-[#b3ffff] border-r-[#5f9c9c] border-t-[#b3ffff]" />
        </div>
      </div>
      <div className="h-[10px] bg-[#ffffcf]" />
      <div className="flex h-2 overflow-hidden border-t border-[#2a2420] bg-linear-to-r from-[#5f6468] via-[#6a5a52] to-[#7a6258]">
        <div className="w-[60px] shrink-0">
          <svg width="60" height="8" viewBox="0 0 60 8"><ellipse cx="27" cy="10" rx="15" ry="9" fill="#9cc4d4" stroke="#30404a" /></svg>
        </div>
        {["#3f9a5a", "#1a50c0", "#f0f0f0", "#e8c070", "#3f9a5a", "#3f9a5a", "#d03030", "#4080d0", "#e02020", "#30a0a0", "#d0d0d0", "#d0d0d0", "#d0d0d0", "#d0d0d0", "#d0d0d0"].map((c, i) => (
          <div key={i} className="w-[88px] shrink-0 rounded-t border border-b-0 border-[#2a2420] bg-linear-to-r from-[#b8aea8] to-[#6e5e56]">
            <svg width="60" height="7" viewBox="0 0 60 7"><rect x="14" y="4" width="18" height="4" fill={c} /></svg>
          </div>
        ))}
      </div>
    </footer>
  );
}

export default function App() {
  return (
    <div className="relative flex h-screen min-h-[868px] flex-col overflow-hidden bg-black text-black">
      <Header />
      <main className="flex min-h-0 flex-1">
        <LayerPanel />
        <Board />
        <ToolPanel />
      </main>
      <Footer />
      <DrillDialog />
    </div>
  );
}
